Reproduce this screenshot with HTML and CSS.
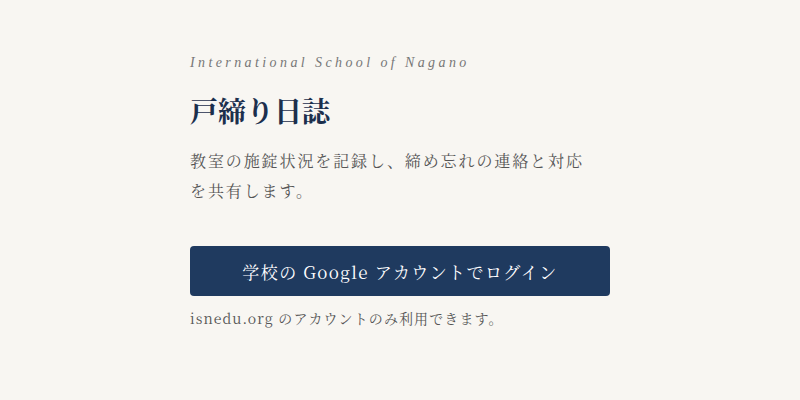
FILE: index.html
```html
<!DOCTYPE html>
<html lang="ja">
<head>
<meta charset="utf-8">
<link rel="stylesheet" href="styles.css">
</head>
<body>
<main class="page">
  <section class="card">
    <p class="eyebrow">International School of Nagano</p>
    <h1 class="title">戸締り日誌</h1>
    <p class="lead">教室の施錠状況を記録し、締め忘れの連絡と対応を共有します。</p>
    <button class="login" type="button">学校の Google アカウントでログイン</button>
    <p class="note">isnedu.org のアカウントのみ利用できます。</p>
  </section>
</main>
</body>
</html>
```
FILE: styles.css
```css
html, body {
  margin: 0;
  padding: 0;
  background: #f8f6f2;
}
body {
  font-family: "Noto Serif CJK JP", "Noto Sans CJK JP", serif;
  color: #555;
}
.page {
  width: 800px;
  height: 400px;
  display: flex;
  justify-content: center;
  align-items: flex-start;
}
.card {
  width: 420px;
  padding-top: 53px;
  display: flex;
  flex-direction: column;
}
.eyebrow {
  margin: 0;
  font-family: "Liberation Serif", serif;
  font-style: italic;
  font-size: 14px;
  letter-spacing: 3.4px;
  color: #777;
  line-height: 20px;
}
.title {
  margin: 18px 0 0;
  font-size: 28px;
  font-weight: 700;
  color: #1c2f4d;
  line-height: 38px;
}
.lead {
  margin: 17px 0 0;
  max-width: 400px;
  font-size: 16px;
  letter-spacing: 1.9px;
  line-height: 30px;
  color: #555;
}
.login {
  margin-top: 40px;
  height: 50px;
  width: 100%;
  border: none;
  border-radius: 4px;
  background: #1f3a5f;
  color: #fff;
  font-family: "Noto Serif CJK JP", "Noto Sans CJK JP", serif;
  font-size: 17px;
  letter-spacing: 1.4px;
  cursor: pointer;
}
.note {
  margin: 10px 0 0;
  font-size: 14px;
  letter-spacing: 1.1px;
  line-height: 24px;
  color: #555;
}
```
